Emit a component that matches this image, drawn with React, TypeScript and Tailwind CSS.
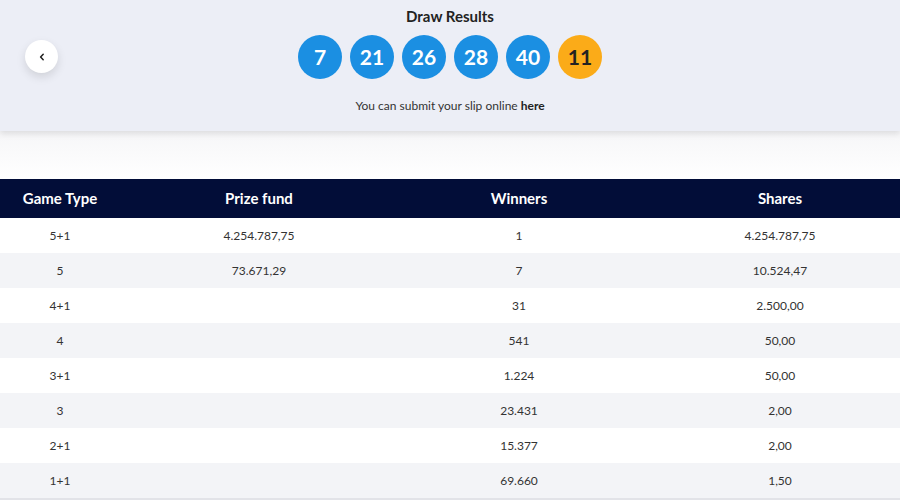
import React from "react";

const rows: [string, string, string, string][] = [
  ["5+1", "4.254.787,75", "1", "4.254.787,75"],
  ["5", "73.671,29", "7", "10.524,47"],
  ["4+1", "", "31", "2.500,00"],
  ["4", "", "541", "50,00"],
  ["3+1", "", "1.224", "50,00"],
  ["3", "", "23.431", "2,00"],
  ["2+1", "", "15.377", "2,00"],
  ["1+1", "", "69.660", "1,50"],
];

const balls = [
  { n: "7", bonus: false },
  { n: "21", bonus: false },
  { n: "26", bonus: false },
  { n: "28", bonus: false },
  { n: "40", bonus: false },
  { n: "11", bonus: true },
];

export default function App() {
  return (
    <div
      className="w-[900px] h-[500px] overflow-hidden bg-white"
      style={{ fontFamily: "Lato, 'Open Sans', sans-serif" }}
    >
      <div className="relative h-[131px] bg-[#eceef6] shadow-[0_3px_6px_rgba(0,0,0,0.10)] flex flex-col items-center">
        <button className="absolute left-[25px] top-[40px] w-[33px] h-[33px] rounded-full bg-white shadow-[0_4px_10px_rgba(0,0,0,0.12)] flex items-center justify-center">
          <svg width="10" height="10" viewBox="0 0 10 10">
            <path d="M6.2 2.2 L3.6 5 L6.2 7.8" fill="none" stroke="#222" strokeWidth="1.5" strokeLinecap="round" strokeLinejoin="round" />
          </svg>
        </button>
        <div className="mt-[6px] text-[15px] leading-[20px] font-bold text-[#222]">Draw Results</div>
        <div className="mt-[9px] flex gap-[8px]">
          {balls.map((b, i) => (
            <div
              key={i}
              className={
                "w-[44px] h-[44px] rounded-full flex items-center justify-center text-[21px] font-bold " +
                (b.bonus ? "bg-[#fbab18] text-[#222]" : "bg-[#1b8fe2] text-white")
              }
            >
              {b.n}
            </div>
          ))}
        </div>
        <div className="mt-[19px] text-[12px] leading-[16px] text-[#333]">
          You can submit your slip online <span className="font-bold text-[#222]">here</span>
        </div>
      </div>
      <div className="h-[48px] bg-gradient-to-b from-[#f6f6f8] to-white"></div>
      <div className="grid grid-cols-[120px_278px_262px_240px] h-[39px] bg-[#020d38] text-white text-[15px] font-bold items-center">
        <div className="text-center">Game Type</div>
        <div className="text-center">Prize fund</div>
        <div className="text-center pr-[20px]">Winners</div>
        <div className="text-center">Shares</div>
      </div>
      {rows.map((r, i) => (
        <div
          key={i}
          className={
            "grid grid-cols-[120px_278px_262px_240px] h-[35px] items-center text-[12px] text-[#333] " +
            (i % 2 === 1 ? "bg-[#f3f4f7]" : "bg-white")
          }
        >
          <div className="text-center">{r[0]}</div>
          <div className="text-center">{r[1]}</div>
          <div className="text-center pr-[20px]">{r[2]}</div>
          <div className="text-center">{r[3]}</div>
        </div>
      ))}
      <div className="h-[2px] bg-[#e2e3e8]"></div>
    </div>
  );
}
